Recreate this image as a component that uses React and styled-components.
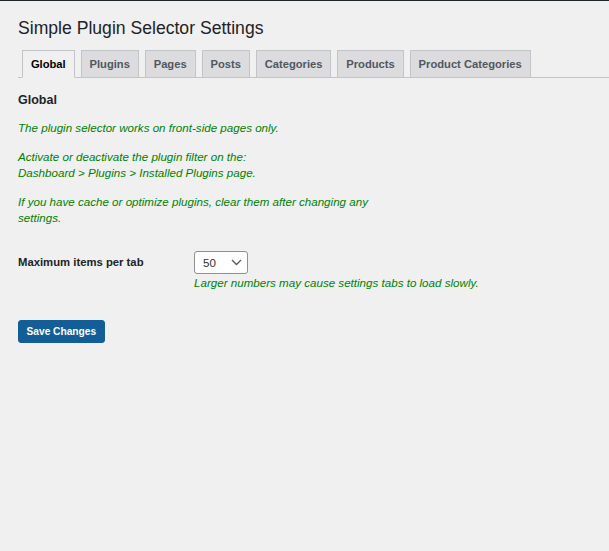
import styled, { createGlobalStyle } from 'styled-components';

const GlobalStyle = createGlobalStyle`
  html, body {
    margin: 0;
    padding: 0;
    background: #f0f0f1;
    font-family: "Liberation Sans", Arial, sans-serif;
    color: #1d2327;
  }
`;

const tabs = [
  'Global',
  'Plugins',
  'Pages',
  'Posts',
  'Categories',
  'Products',
  'Product Categories',
];

const App = () => {
  return (
    <>
      <GlobalStyle />
      <TopLine />
      <Wrap>
        <Title>Simple Plugin Selector Settings</Title>
        <TabBar>
          {tabs.map((t, i) => (
            <Tab key={t} $active={i === 0}>
              {t}
            </Tab>
          ))}
        </TabBar>

        <SectionTitle>Global</SectionTitle>
        <Notes>
          <Note>The plugin selector works on front-side pages only.</Note>
          <Note>
            Activate or deactivate the plugin filter on the:
            <br />
            Dashboard &gt; Plugins &gt; Installed Plugins page.
          </Note>
          <Note>
            If you have cache or optimize plugins, clear them after changing any
            settings.
          </Note>
        </Notes>

        <FormRow>
          <Label>Maximum items per tab</Label>
          <Field>
            <Select>
              <span>50</span>
              <svg width="11" height="7" viewBox="0 0 11 7" fill="none">
                <path
                  d="M1 1l4.5 4.5L10 1"
                  stroke="#50575e"
                  strokeWidth="1.3"
                />
              </svg>
            </Select>
            <Description>
              Larger numbers may cause settings tabs to load slowly.
            </Description>
          </Field>
        </FormRow>

        <SaveButton>Save Changes</SaveButton>
      </Wrap>
    </>
  );
};

export default App;

const TopLine = styled.div`
  height: 1px;
  background: #1d2327;
`;

const Wrap = styled.div`
  display: flex;
  flex-direction: column;
  align-items: flex-start;
  padding: 16px 0 0 18px;
`;

const Title = styled.h1`
  margin: 0;
  font-size: 17.6px;
  font-weight: 400;
  line-height: 22px;
  color: #1d2327;
`;

const TabBar = styled.div`
  display: flex;
  align-self: stretch;
  gap: 6px;
  margin-top: 11px;
  padding-left: 4px;
  border-bottom: 1px solid #c3c4c7;
`;

const Tab = styled.div`
  height: 26px;
  display: flex;
  align-items: center;
  padding: 0 7.9px;
  margin-bottom: -1px;
  border: 1px solid #c3c4c7;
  border-bottom-color: ${(p) => (p.$active ? '#f0f0f1' : '#c3c4c7')};
  background: ${(p) => (p.$active ? '#f0f0f1' : '#dcdcde')};
  color: ${(p) => (p.$active ? '#000' : '#50575e')};
  font-size: 11.2px;
  font-weight: 700;
  white-space: nowrap;
`;

const SectionTitle = styled.h2`
  margin: 14px 0 0;
  font-size: 12.5px;
  font-weight: 700;
  line-height: 16px;
  color: #1d2327;
`;

const Notes = styled.div`
  display: flex;
  flex-direction: column;
  gap: 13px;
  margin-top: 12px;
  max-width: 385px;
`;

const Note = styled.p`
  margin: 0;
  font-size: 11.6px;
  font-style: italic;
  line-height: 16px;
  color: #008000;
`;

const FormRow = styled.div`
  display: flex;
  margin-top: 25px;
`;

const Label = styled.div`
  width: 176px;
  padding-top: 3px;
  font-size: 11.3px;
  font-weight: 700;
  line-height: 16px;
  color: #1d2327;
`;

const Field = styled.div`
  display: flex;
  flex-direction: column;
  align-items: flex-start;
  gap: 1px;
`;

const Select = styled.div`
  box-sizing: border-box;
  width: 54px;
  height: 23px;
  display: flex;
  align-items: center;
  justify-content: space-between;
  padding: 0 5px 0 8px;
  background: #fff;
  border: 1px solid #8c8f94;
  border-radius: 3px;
  font-size: 11.6px;
  color: #2c3338;
`;

const Description = styled.div`
  font-size: 11.6px;
  font-style: italic;
  line-height: 16px;
  color: #008000;
`;

const SaveButton = styled.button`
  margin-top: 29px;
  height: 23px;
  padding: 0 7.5px;
  border: 1px solid #135e96;
  border-radius: 3px;
  background: #135e96;
  color: #fff;
  font-family: "Liberation Sans", Arial, sans-serif;
  font-size: 10.2px;
  font-weight: 700;
  cursor: pointer;
`;
